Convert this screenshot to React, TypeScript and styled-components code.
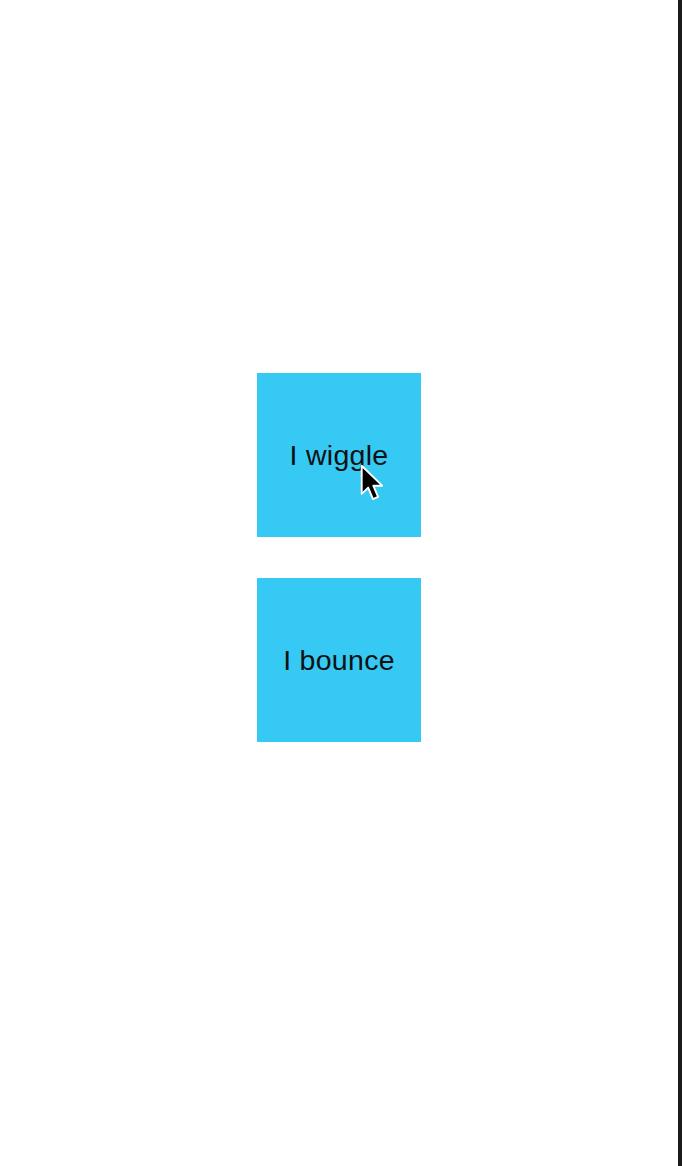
import React from "react";
import styled, { createGlobalStyle } from "styled-components";

const Global = createGlobalStyle`
  html, body { margin: 0; padding: 0; background: #ffffff; }
  body { font-family: "Liberation Sans", Arial, sans-serif; }
`;

const Page = styled.div`
  box-sizing: border-box;
  width: 682px;
  height: 1166px;
  background: #ffffff;
  border-right: 4px solid #1b1b1b;
  display: flex;
  flex-direction: column;
  align-items: center;
  padding-top: 373px;
  gap: 41px;
  overflow: hidden;
`;

const Box = styled.div`
  position: relative;
  width: 164px;
  height: 164px;
  background: #35c9f4;
  display: flex;
  align-items: center;
  justify-content: center;
  font-family: "Liberation Sans", Arial, sans-serif;
  font-size: 28.5px;
  color: #111111;
  letter-spacing: 0.3px;
`;

const Label = styled.span`
  display: block;
  line-height: 1;
`;

const Cursor = styled.svg`
  position: absolute;
  left: 103px;
  top: 91px;
  width: 29px;
  height: 41px;
  pointer-events: none;
`;

function Arrow() {
  return (
    <Cursor viewBox="0 0 17 24" aria-hidden>
      <path
        d="M1 1 L1 17.5 L4.8 13.8 L7.6 20.6 L10.6 19.3 L7.8 12.7 L13 12.7 Z"
        fill="#000000"
        stroke="#ffffff"
        strokeWidth="1.1"
        strokeLinejoin="round"
      />
    </Cursor>
  );
}

export default function App() {
  return (
    <>
      <Global />
      <Page>
        <Box>
          <Label>I wiggle</Label>
          <Arrow />
        </Box>
        <Box>
          <Label>I bounce</Label>
        </Box>
      </Page>
    </>
  );
}
